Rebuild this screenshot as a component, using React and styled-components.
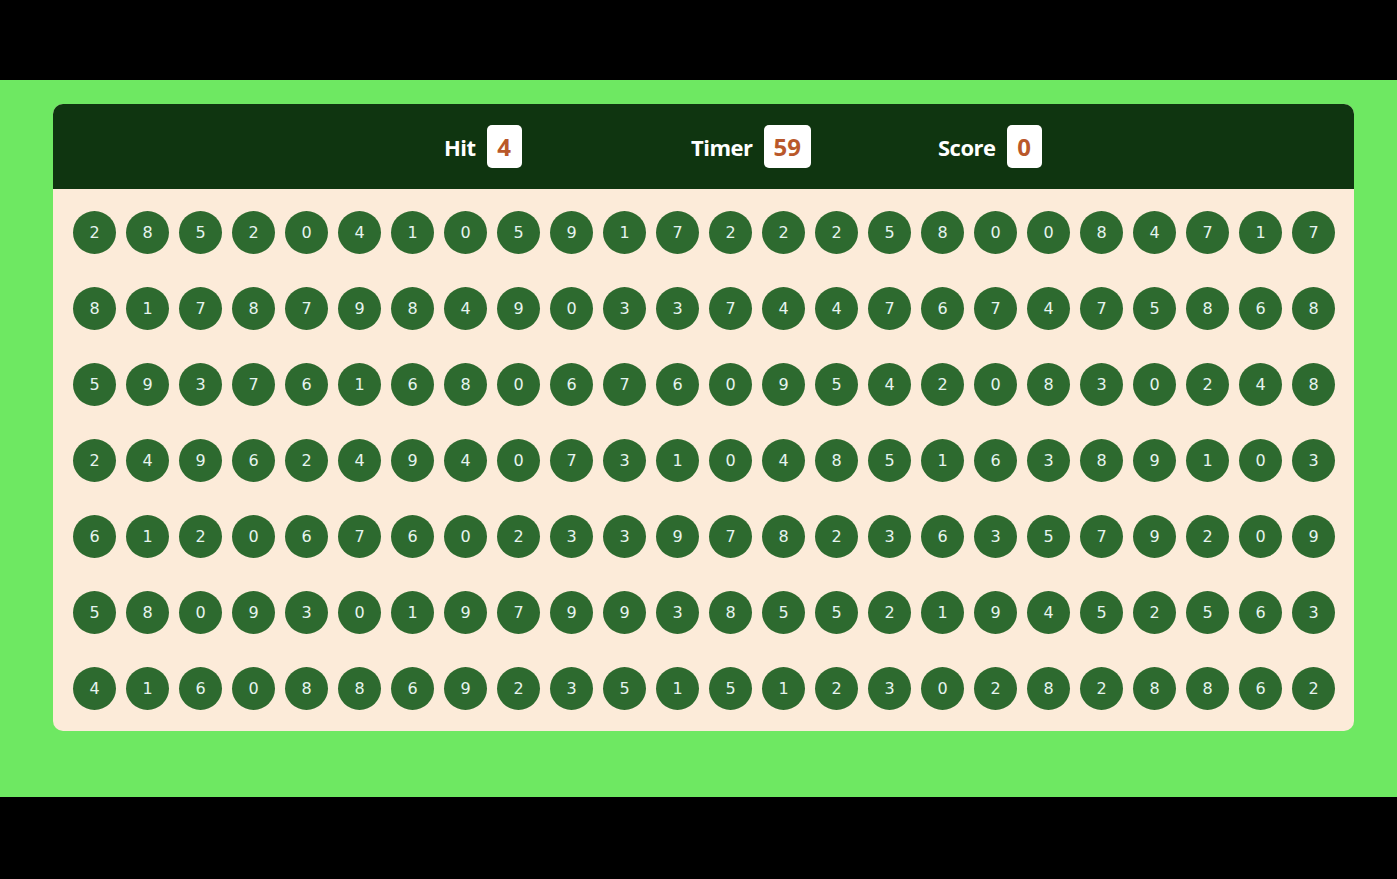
import React from "react";
import styled, { createGlobalStyle } from "styled-components";

const Global = createGlobalStyle`
  html, body { margin: 0; padding: 0; background: #000; }
  body { font-family: "Open Sans", "Noto Sans", sans-serif; }
`;

const Page = styled.div`
  width: 100%;
  min-height: 879px;
  background: #000;
  padding-top: 80px;
  box-sizing: border-box;
`;

const Field = styled.main`
  background: #6ee862;
  height: 717px;
  padding: 24px 43px 0 53px;
  box-sizing: border-box;
`;

const Panel = styled.section`
  width: 1301px;
  border-radius: 10px;
  overflow: hidden;
  background: #fcebd9;
`;

const Header = styled.header`
  height: 85px;
  background: #0f3510;
  display: flex;
  align-items: center;
  padding-left: 391px;
  box-sizing: border-box;
`;

const Stat = styled.div`
  width: 247px;
  display: flex;
  align-items: center;
  gap: 11px;
`;

const Label = styled.span`
  color: #fff;
  font-weight: 700;
  font-size: 22px;
  letter-spacing: -0.5px;
`;

const Value = styled.span`
  background: #fff;
  color: #b9582a;
  font-weight: 700;
  font-size: 24px;
  height: 43px;
  padding: 0 10px;
  min-width: 15px;
  border-radius: 5px;
  display: flex;
  align-items: center;
  justify-content: center;
`;

const Board = styled.div`
  display: grid;
  grid-template-columns: repeat(24, 43px);
  column-gap: 10px;
  row-gap: 33px;
  padding: 22px 20px 21px 20px;
`;

const Bubble = styled.div`
  width: 43px;
  height: 43px;
  border-radius: 50%;
  background: #2d6a2f;
  color: #e6f4ef;
  font-family: "DejaVu Sans", sans-serif;
  font-size: 16px;
  display: flex;
  align-items: center;
  justify-content: center;
`;

const rows = [
  "285204105917222580084717",
  "817879849033744767475868",
  "593761680676095420830248",
  "249624940731048516389103",
  "612067602339782363579209",
  "580930197993855219452563",
  "416088692351512302828862",
];

export default function App() {
  return (
    <>
      <Global />
      <Page>
        <Field>
          <Panel>
            <Header>
              <Stat>
                <Label>Hit</Label>
                <Value>4</Value>
              </Stat>
              <Stat>
                <Label>Timer</Label>
                <Value>59</Value>
              </Stat>
              <Stat>
                <Label>Score</Label>
                <Value>0</Value>
              </Stat>
            </Header>
            <Board>
              {rows.flatMap((r, ri) =>
                r.split("").map((d, ci) => <Bubble key={ri + "-" + ci}>{d}</Bubble>)
              )}
            </Board>
          </Panel>
        </Field>
      </Page>
    </>
  );
}
